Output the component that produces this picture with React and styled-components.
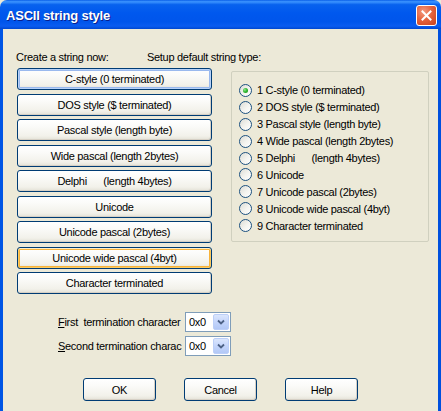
import React from "react";
import styled, { createGlobalStyle, css } from "styled-components";

const GlobalStyle = createGlobalStyle`
  html, body {
    margin: 0;
    padding: 0;
    background: #ece9d8;
  }
  body {
    font-family: "Liberation Sans", Tahoma, Arial, sans-serif;
    font-size: 11px;
    letter-spacing: -0.3px;
    color: #000;
  }
`;

const Window = styled.div`
  width: 441px;
  height: 411px;
  overflow: hidden;
  display: flex;
  flex-direction: column;
  background: #ece9d8;
`;

const TitleBar = styled.div`
  height: 29px;
  flex: none;
  display: flex;
  align-items: center;
  justify-content: space-between;
  padding: 0 4px 0 6px;
  border-radius: 7px 7px 0 0;
  background: linear-gradient(
    to bottom,
    #0a5fe8 0%,
    #3d95ff 6%,
    #0862ee 16%,
    #0058ee 45%,
    #0055eb 75%,
    #0a5cf0 90%,
    #0047d0 100%
  );
`;

const Title = styled.span`
  font-family: "Liberation Sans", Tahoma, sans-serif;
  font-weight: bold;
  font-size: 13px;
  letter-spacing: -0.2px;
  color: #fff;
  text-shadow: 1px 1px 0 #0a1e8c;
  margin-top: 1px;
`;

const CloseButton = styled.div`
  width: 19px;
  height: 19px;
  margin-top: 2px;
  border: 1px solid #fff;
  border-radius: 3px;
  background: radial-gradient(circle at 35% 30%, #f49a80 0%, #e5643f 45%, #c8401c 100%);
  display: flex;
  align-items: center;
  justify-content: center;
`;

const Body = styled.div`
  flex: 1;
  border-left: 3px solid #0055e5;
  border-right: 3px solid #0050de;
  padding: 22px 0 0 13px;
  display: flex;
  flex-direction: column;
`;

const LabelRow = styled.div`
  display: flex;
  height: 13px;
  line-height: 13px;
  white-space: nowrap;
`;

const Label = styled.span`
  width: ${(p) => p.$w || "auto"};
`;

const MainRow = styled.div`
  display: flex;
  margin-top: 4px;
`;

const ButtonColumn = styled.div`
  display: flex;
  flex-direction: column;
  gap: 3.5px;
  width: 195px;
  margin-left: 1px;
`;

const XpButton = styled.button`
  box-sizing: border-box;
  width: ${(p) => p.$w || "100%"};
  height: ${(p) => p.$h || "22px"};
  padding: 0;
  border: 1px solid #003c74;
  border-radius: 3px;
  background: linear-gradient(to bottom, #ffffff 0%, #fbfbf9 30%, #f2f1ea 80%, #e3e1d6 100%);
  font-family: "Liberation Sans", Tahoma, Arial, sans-serif;
  font-size: 11px;
  letter-spacing: -0.3px;
  color: #000;
  white-space: pre;
  box-shadow: inset -1px -1px 0 #d6d0c5;
  ${(p) =>
    p.$variant === "default" &&
    css`
      box-shadow: inset 0 0 0 1px #b8d2f8, inset 0 0 0 2px #9ab9ee;
    `}
  ${(p) =>
    p.$variant === "hot" &&
    css`
      box-shadow: inset 0 1px 0 #ffefc8, inset 0 0 0 1px #fbca60, inset 0 -1px 0 #e59700, inset 0 0 0 2px #f8b33a;
    `}
`;

const GroupBox = styled.div`
  box-sizing: border-box;
  width: 198px;
  height: 171px;
  margin: 3px 0 0 19px;
  border: 1px solid #d0d0bf;
  border-radius: 2px;
  padding: 10px 0 0 7px;
  display: flex;
  flex-direction: column;
`;

const RadioRow = styled.label`
  display: flex;
  align-items: center;
  height: 16.9px;
  white-space: pre;
`;

const RadioCircle = styled.span`
  box-sizing: border-box;
  width: 13px;
  height: 13px;
  border-radius: 50%;
  border: 1px solid #1c5180;
  background: linear-gradient(135deg, #dcdcd5 0%, #f4f4f0 55%, #ffffff 100%);
  margin-right: 5px;
  display: flex;
  align-items: center;
  justify-content: center;
  &::after {
    content: "";
    width: 5px;
    height: 5px;
    border-radius: 50%;
    background: radial-gradient(circle at 35% 35%, #8ee88e 0%, #2db52d 50%, #1a8a1a 100%);
    display: ${(p) => (p.$checked ? "block" : "none")};
  }
`;

const TermBlock = styled.div`
  display: flex;
  flex-direction: column;
  gap: 4px;
  margin: 18px 0 0 42px;
`;

const TermRow = styled.div`
  display: flex;
  align-items: center;
`;

const TermLabel = styled.span`
  width: 127px;
  overflow: hidden;
  white-space: pre;
  span {
    text-decoration: underline;
  }
`;

const Combo = styled.div`
  box-sizing: border-box;
  width: 46px;
  height: 20px;
  border: 1px solid #7f9db9;
  background: #fff;
  display: flex;
  align-items: center;
  padding: 1px;
`;

const ComboText = styled.span`
  flex: 1;
  padding-left: 2px;
`;

const ComboArrow = styled.span`
  box-sizing: border-box;
  width: 16px;
  height: 16px;
  border: 1px solid #bccff8;
  border-radius: 2px;
  background: linear-gradient(to bottom, #dbe6fd 0%, #c4d5fb 50%, #b2c8f6 100%);
  display: flex;
  align-items: center;
  justify-content: center;
`;

const FooterRow = styled.div`
  display: flex;
  gap: 28px;
  margin: 22px 0 0 67px;
`;

const createButtons = [
  { label: "C-style (0 terminated)", variant: "default" },
  { label: "DOS style ($ terminated)" },
  { label: "Pascal style (length byte)" },
  { label: "Wide pascal (length 2bytes)" },
  { label: "Delphi      (length 4bytes)" },
  { label: "Unicode" },
  { label: "Unicode pascal (2bytes)" },
  { label: "Unicode wide pascal (4byt)", variant: "hot" },
  { label: "Character terminated" },
];

const radioItems = [
  "1 C-style (0 terminated)",
  "2 DOS style ($ terminated)",
  "3 Pascal style (length byte)",
  "4 Wide pascal (length 2bytes)",
  "5 Delphi      (length 4bytes)",
  "6 Unicode",
  "7 Unicode pascal (2bytes)",
  "8 Unicode wide pascal (4byt)",
  "9 Character terminated",
];

function ComboBox() {
  return (
    <Combo>
      <ComboText>0x0</ComboText>
      <ComboArrow>
        <svg width="8" height="6" viewBox="0 0 8 6">
          <path d="M1 1.5 L4 4.5 L7 1.5" fill="none" stroke="#4d6185" strokeWidth="1.8" />
        </svg>
      </ComboArrow>
    </Combo>
  );
}

export default function App() {
  return (
    <Window>
      <GlobalStyle />
      <TitleBar>
        <Title>ASCII string style</Title>
        <CloseButton>
          <svg width="11" height="11" viewBox="0 0 11 11">
            <path d="M1.5 1.5 L9.5 9.5 M9.5 1.5 L1.5 9.5" stroke="#fff" strokeWidth="2" strokeLinecap="square" />
          </svg>
        </CloseButton>
      </TitleBar>
      <Body>
        <LabelRow>
          <Label $w="131px">Create a string now:</Label>
          <Label>Setup default string type:</Label>
        </LabelRow>
        <MainRow>
          <ButtonColumn>
            {createButtons.map((b) => (
              <XpButton key={b.label} $variant={b.variant}>
                {b.label}
              </XpButton>
            ))}
          </ButtonColumn>
          <GroupBox>
            {radioItems.map((r, i) => (
              <RadioRow key={r}>
                <RadioCircle $checked={i === 0} />
                {r}
              </RadioRow>
            ))}
          </GroupBox>
        </MainRow>
        <TermBlock>
          <TermRow>
            <TermLabel>
              <span>F</span>irst  termination character
            </TermLabel>
            <ComboBox />
          </TermRow>
          <TermRow>
            <TermLabel>
              <span>S</span>econd termination charac
            </TermLabel>
            <ComboBox />
          </TermRow>
        </TermBlock>
        <FooterRow>
          <XpButton $w="73px" $h="23px">OK</XpButton>
          <XpButton $w="73px" $h="23px">Cancel</XpButton>
          <XpButton $w="73px" $h="23px">Help</XpButton>
        </FooterRow>
      </Body>
    </Window>
  );
}
